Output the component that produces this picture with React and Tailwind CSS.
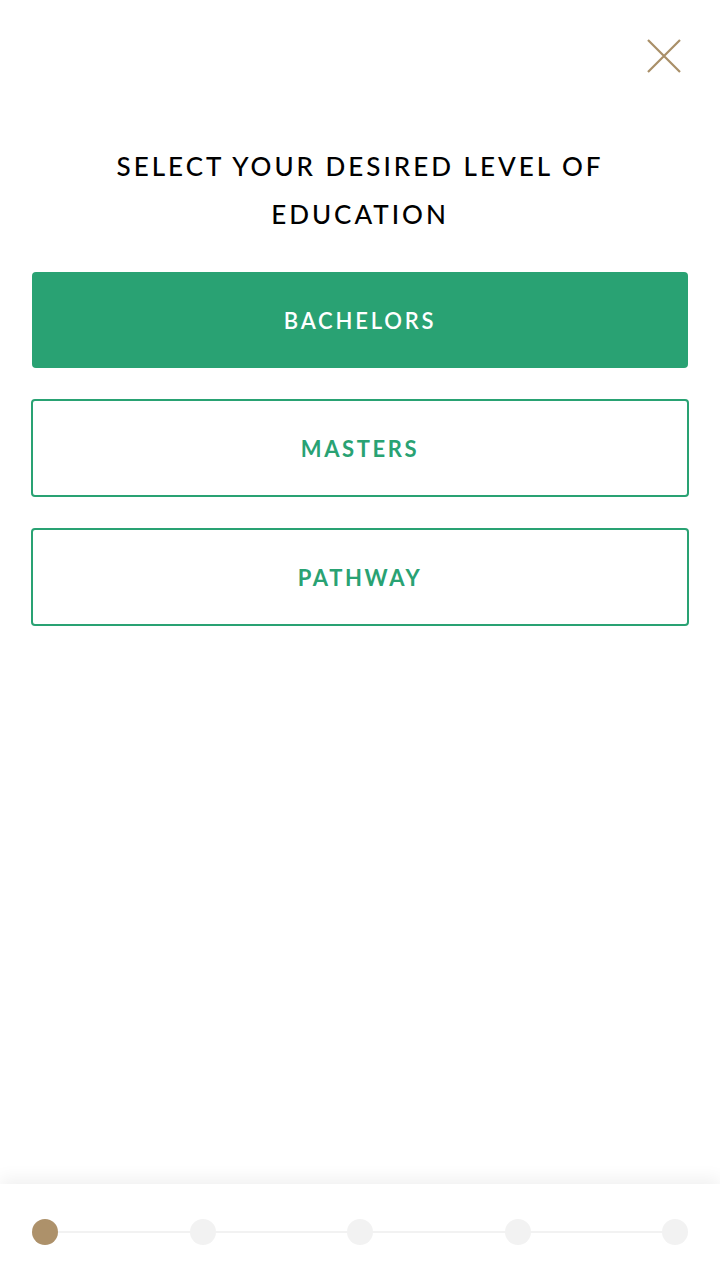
export default function App() {
  const steps = [0, 1, 2, 3, 4];
  return (
    <div
      className="relative w-[720px] h-[1280px] bg-white overflow-hidden flex flex-col"
      style={{ fontFamily: 'Lato, "Open Sans", sans-serif' }}
    >
      <div className="flex justify-end pt-[38px] pr-[38px] h-[104px]">
        <svg width="36" height="36" viewBox="0 0 36 36" fill="none">
          <path d="M2 2 L34 34 M34 2 L2 34" stroke="#a98f68" strokeWidth="2.2" />
        </svg>
      </div>

      <h1 className="mx-auto w-[620px] text-center text-[26px] leading-[48px] tracking-[3px] text-black font-medium pt-[38px]">
        SELECT YOUR DESIRED LEVEL OF EDUCATION
      </h1>

      <div className="px-8 mt-[34px] flex flex-col gap-[31px]">
        <button className="h-[96px] rounded-[4px] bg-[#29a273] text-white text-[22px] font-semibold tracking-[2.8px]">
          BACHELORS
        </button>
        <button className="h-[98px] -mx-px rounded-[4px] border-2 border-[#29a273] text-[#29a273] text-[22px] font-bold tracking-[2.6px]">
          MASTERS
        </button>
        <button className="h-[98px] -mx-px rounded-[4px] border-2 border-[#29a273] text-[#29a273] text-[22px] font-bold tracking-[2.6px]">
          PATHWAY
        </button>
      </div>

      <div className="mt-auto h-[96px] bg-white shadow-[0_-6px_16px_rgba(0,0,0,0.06)] px-8 flex items-center">
        <div className="relative flex-1 flex justify-between items-center">
          <div className="absolute left-[13px] right-[13px] top-1/2 -translate-y-1/2 h-[2px] bg-[#f2f2f2]" />
          {steps.map((s) => (
            <div
              key={s}
              className={`relative w-[26px] h-[26px] rounded-full ${s === 0 ? 'bg-[#ad916a]' : 'bg-[#f2f2f2]'}`}
            />
          ))}
        </div>
      </div>
    </div>
  );
}
